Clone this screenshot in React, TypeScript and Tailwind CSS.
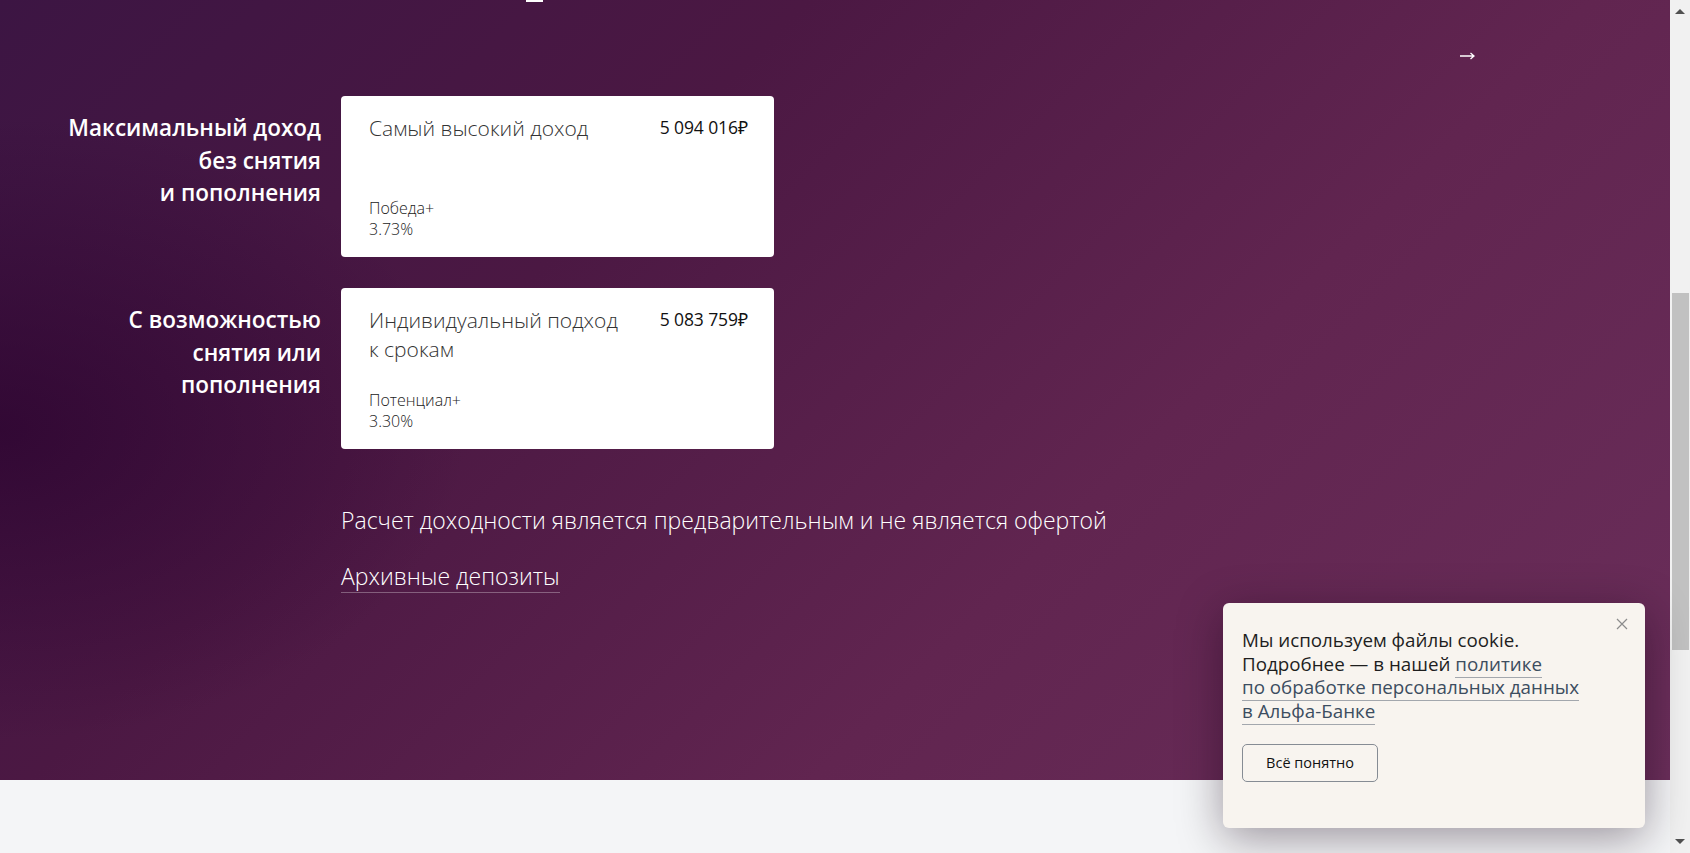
import React from "react";

const deposits = [
  {
    label: ["Максимальный доход", "без снятия", "и пополнения"],
    title: ["Самый высокий доход"],
    amount: "5 094 016₽",
    name: "Победа+",
    rate: "3.73%",
  },
  {
    label: ["С возможностью", "снятия или", "пополнения"],
    title: ["Индивидуальный подход", "к срокам"],
    amount: "5 083 759₽",
    name: "Потенциал+",
    rate: "3.30%",
  },
];

function DepositCard({ d }: { d: (typeof deposits)[number] }) {
  return (
    <div className="flex h-[161px] flex-col justify-between rounded-[4px] bg-white pb-[17px] pl-[28px] pr-[26px] pt-[18px] text-[#222]">
      <div className="flex items-start justify-between">
        <div className="text-[21px] font-light leading-[29px] text-[#333]">
          {d.title.map((t) => (
            <div key={t}>{t}</div>
          ))}
        </div>
        <div className="pt-[2px] text-[17.5px] leading-[22px] tracking-[-0.1px] text-[#111]">{d.amount}</div>
      </div>
      <div className="text-[16px] font-light leading-[21px] text-[#222]">
        <div>{d.name}</div>
        <div>{d.rate}</div>
      </div>
    </div>
  );
}

function Scrollbar() {
  return (
    <div className="flex w-[20px] shrink-0 flex-col items-center bg-[#f1f1f1]">
      <div className="mt-[9px] h-0 w-0 border-x-[5px] border-b-[5px] border-x-transparent border-b-[#505050]" />
      <div className="mt-[279px] h-[357px] w-[17px] bg-[#c1c1c1]" />
      <div className="flex-1" />
      <div className="mb-[9px] h-0 w-0 border-x-[5px] border-t-[5px] border-x-transparent border-t-[#505050]" />
    </div>
  );
}

function CookieBanner() {
  return (
    <div className="absolute left-[1223px] top-[603px] h-[225px] w-[422px] rounded-[6px] bg-[#f8f4ef] pl-[19px] pr-[20px] pt-[26px] shadow-[0_10px_45px_rgba(20,0,20,0.4)]">
      <button className="absolute right-[17px] top-[15px] text-[#8c8c8c]" aria-label="Закрыть">
        <svg width="12" height="12" viewBox="0 0 12 12" fill="none" stroke="currentColor" strokeWidth="1.2">
          <path d="M1 1l10 10M11 1L1 11" />
        </svg>
      </button>
      <p className="text-[18.8px] leading-[23.5px] text-[#1e1e1e]">
        Мы используем файлы cookie.
        <br />
        Подробнее — в нашей{" "}
        <a href="#" className="border-b border-[#a3a7ad] text-[#3c4d60]">
          политике
          <br />
          по обработке персональных данных
          <br />в Альфа-Банке
        </a>
      </p>
      <button className="mt-[21px] h-[38px] w-[136px] rounded-[5px] border border-[#868c94] text-[14.5px] font-medium text-[#111]">
        Всё понятно
      </button>
    </div>
  );
}

export default function App() {
  return (
    <div
      className="relative flex h-[853px] w-[1690px] overflow-hidden"
      style={{ fontFamily: '"Open Sans", "Noto Sans", sans-serif' }}
    >
      <div className="flex min-w-0 flex-1 flex-col">
        <section className="relative flex h-[780px] flex-col bg-[radial-gradient(ellipse_28%_40%_at_0%_55%,rgba(42,2,46,0.7)_0%,rgba(42,2,46,0)_100%),linear-gradient(135deg,#3c1543_0%,#4b1843_33%,#612550_65%,#6a2e5a_100%)] text-white">
          <div className="ml-[526px] h-[2px] w-[17px] bg-white" />

          <div className="mt-[50px] flex justify-end pr-[195px]">
            <svg width="15" height="8" viewBox="0 0 15 8" fill="none" stroke="white" strokeWidth="1.3">
              <path d="M0 4h14M10.5 1l3.5 3-3.5 3" />
            </svg>
          </div>

          <div className="mt-[36px] grid grid-cols-[321px_433px] gap-x-[20px] gap-y-[31px]">
            {deposits.map((d) => (
              <React.Fragment key={d.amount}>
                <div className="pt-[16px] text-right text-[22.5px] font-semibold leading-[32.5px]">
                  {d.label.map((l) => (
                    <div key={l}>{l}</div>
                  ))}
                </div>
                <DepositCard d={d} />
              </React.Fragment>
            ))}
          </div>

          <div className="ml-[341px] mt-[54px] flex flex-col items-start">
            <p className="text-[23px] font-light leading-[34px]">
              Расчет доходности является предварительным и не является офертой
            </p>
            <a href="#" className="mt-[24px] border-b border-white/30 text-[23px] font-light leading-[31px]">
              Архивные депозиты
            </a>
          </div>
        </section>
        <div className="flex-1 bg-[#f4f5f7]" />
      </div>

      <Scrollbar />
      <CookieBanner />
    </div>
  );
}
